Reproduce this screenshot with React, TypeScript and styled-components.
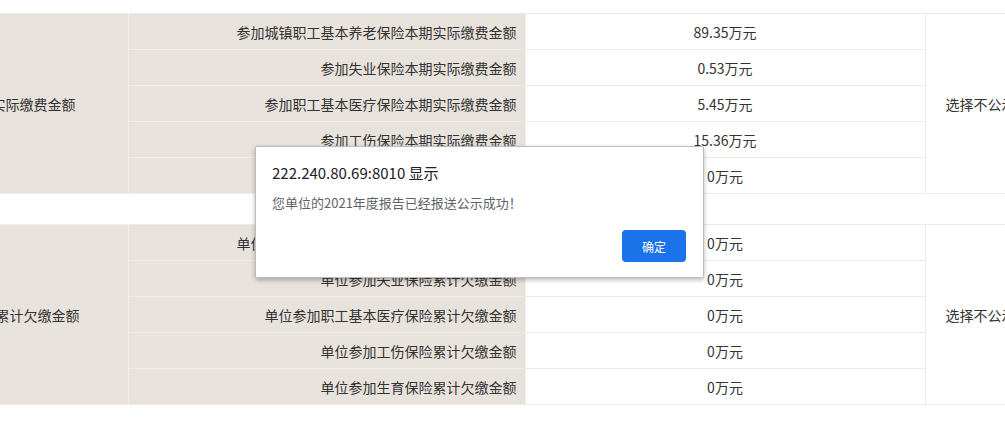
import React from 'react';
import styled, { createGlobalStyle } from 'styled-components';

const GlobalStyle = createGlobalStyle`
    html, body {
        margin: 0;
        padding: 0;
        background: #fff;
        overflow: hidden;
    }
    body {
        font-family: "Noto Sans CJK SC", "Noto Sans", sans-serif;
        color: #333;
    }
`;

const Page = styled.div`
    position: relative;
    width: 1005px;
    height: 427px;
    padding-top: 13px;
    box-sizing: border-box;
    overflow: hidden;
`;

const Table = styled.table`
    border-collapse: collapse;
    table-layout: fixed;
    width: 1040px;
    font-size: 14px;
    margin-bottom: 30px;
`;

const Row = styled.tr`
    height: 36px;
`;

// cellule de gauche (rowspan) en beige
const GroupCell = styled.td<{ $pad: number }>`
    padding: 0 ${(p) => p.$pad}px 0 0;
    background: #e8e2dc;
    border: 1px solid #f1eeea;
    border-left: none;
    text-align: right;
    white-space: nowrap;
    overflow: visible;
    direction: rtl;
    box-sizing: border-box;
`;

const LabelCell = styled.td`
    padding: 0 8px 0 0;
    background: #e8e2dc;
    border: 1px solid #f1eeea;
    border-top-color: #ebebeb;
    text-align: right;
    white-space: nowrap;
    box-sizing: border-box;
`;

const ValueCell = styled.td`
    padding: 0;
    border: 1px solid #ebebeb;
    text-align: center;
    white-space: nowrap;
    box-sizing: border-box;
`;

const NoteCell = styled.td`
    padding: 0 0 0 20px;
    border: 1px solid #ebebeb;
    border-right: none;
    text-align: left;
    white-space: nowrap;
    box-sizing: border-box;
`;

const Dialog = styled.div`
    position: absolute;
    left: 255px;
    top: 146px;
    width: 449px;
    box-sizing: border-box;
    padding: 16px 16px 15px 16px;
    background: #fff;
    border: 1px solid #bcbcbc;
    border-radius: 2px;
    box-shadow: 0 2px 5px rgba(0, 0, 0, 0.28);
    display: flex;
    flex-direction: column;
`;

const DialogTitle = styled.div`
    font-size: 15px;
    line-height: 20px;
    color: #202124;
`;

const DialogMessage = styled.div`
    margin-top: 10px;
    font-size: 13px;
    line-height: 20px;
    color: #5f6368;
`;

const DialogFooter = styled.div`
    margin-top: 17px;
    display: flex;
    justify-content: flex-end;
`;

const OkButton = styled.button`
    width: 64px;
    height: 32px;
    border: none;
    border-radius: 4px;
    background: #1a73e8;
    color: #fff;
    font-family: inherit;
    font-size: 12px;
    padding: 0;
    margin-right: 1px;
`;

type Block = {
    title: string;
    pad: number;
    rows: { label: string; value: string }[];
};

const blocks: Block[] = [
    {
        title: '单位参加社会保险本期实际缴费金额',
        pad: 52,
        rows: [
            { label: '参加城镇职工基本养老保险本期实际缴费金额', value: '89.35万元' },
            { label: '参加失业保险本期实际缴费金额', value: '0.53万元' },
            { label: '参加职工基本医疗保险本期实际缴费金额', value: '5.45万元' },
            { label: '参加工伤保险本期实际缴费金额', value: '15.36万元' },
            { label: '参加生育保险本期实际缴费金额', value: '0万元' },
        ],
    },
    {
        title: '单位参加社会保险累计欠缴金额',
        pad: 48,
        rows: [
            { label: '单位参加城镇职工基本养老保险累计欠缴金额', value: '0万元' },
            { label: '单位参加失业保险累计欠缴金额', value: '0万元' },
            { label: '单位参加职工基本医疗保险累计欠缴金额', value: '0万元' },
            { label: '单位参加工伤保险累计欠缴金额', value: '0万元' },
            { label: '单位参加生育保险累计欠缴金额', value: '0万元' },
        ],
    },
];

const App = () => {
    return (
        <>
            <GlobalStyle />
            <Page>
                {blocks.map((b) => (
                    <Table key={b.title}>
                        <colgroup>
                            <col style={{ width: 128 }} />
                            <col style={{ width: 397 }} />
                            <col style={{ width: 400 }} />
                            <col />
                        </colgroup>
                        <tbody>
                            {b.rows.map((r, i) => (
                                <Row key={r.label}>
                                    {i === 0 && (
                                        <GroupCell rowSpan={5} $pad={b.pad}>
                                            {b.title}
                                        </GroupCell>
                                    )}
                                    <LabelCell>{r.label}</LabelCell>
                                    <ValueCell>{r.value}</ValueCell>
                                    {i === 0 && <NoteCell rowSpan={5}>选择不公示</NoteCell>}
                                </Row>
                            ))}
                        </tbody>
                    </Table>
                ))}

                <Dialog>
                    <DialogTitle>222.240.80.69:8010 显示</DialogTitle>
                    <DialogMessage>您单位的2021年度报告已经报送公示成功！</DialogMessage>
                    <DialogFooter>
                        <OkButton>确定</OkButton>
                    </DialogFooter>
                </Dialog>
            </Page>
        </>
    );
};

export default App;
